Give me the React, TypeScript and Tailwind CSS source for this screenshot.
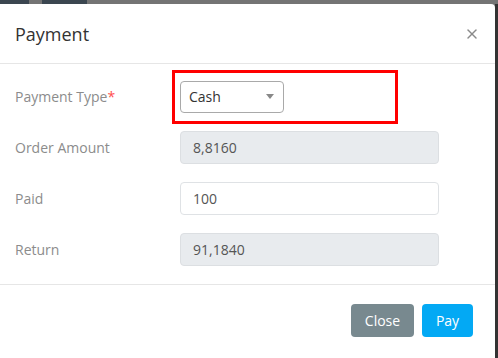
import { X } from 'lucide-react'

const FONT = { fontFamily: '"Open Sans", "Noto Sans", sans-serif' }

interface Row {
  label: string
  value: string
  readOnly?: boolean
}

const ROWS: Row[] = [
  { label: 'Order Amount', value: '8,8160', readOnly: true },
  { label: 'Paid', value: '100' },
  { label: 'Return', value: '91,1840', readOnly: true }
]

function Field({ row }: { row: Row }): JSX.Element {
  return (
    <div className="flex items-center h-[33px]">
      <div className="w-[165px] text-[14px] text-[#8c8c8c]">{row.label}</div>
      <div
        className={[
          'w-[259px] h-[33px] flex items-center px-[12px] rounded-[4px] border text-[14px] text-[#555]',
          row.readOnly ? 'bg-[#e8ebee] border-[#dcdfe2]' : 'bg-white border-[#dfe2e5]'
        ].join(' ')}
      >
        {row.value}
      </div>
    </div>
  )
}

export default function App(): JSX.Element {
  return (
    <div className="w-[498px] h-[358px] bg-[#747474] flex flex-col overflow-hidden" style={FONT}>
      {/* backdrop strip above the dialog */}
      <div className="h-[4px] flex shrink-0">
        <div className="w-[29px] bg-[#3b4650]" />
        <div className="w-[13px]" />
        <div className="w-[45px] bg-[#3b4650]" />
      </div>
      <div className="flex flex-1">
        <div className="w-[495px] bg-white rounded-tr-[4px] flex flex-col">
          <div className="h-[60px] flex items-center justify-between pl-[15px] pr-[15px] border-b border-[#e6e6e6]">
            <span className="text-[18px] text-[#333] pt-[2px]">Payment</span>
            <X size={16} strokeWidth={2.2} className="text-[#8a8a8a]" />
          </div>
          <div className="pl-[15px] pt-[16px] pb-[18px] flex flex-col gap-[18px] border-b border-[#e6e6e6]">
            <div className="flex items-center h-[33px]">
              <div className="w-[165px] text-[14px] text-[#8c8c8c]">
                Payment Type<span className="text-[#ff4d4d]">*</span>
              </div>
              <div className="relative">
                <div className="w-[104px] h-[32px] flex items-center justify-between pl-[8px] pr-[9px] rounded-[4px] border border-[#a9a9a9] text-[14px] text-[#333]">
                  <span>Cash</span>
                  <span className="w-0 h-0 border-l-[4px] border-r-[4px] border-t-[5px] border-l-transparent border-r-transparent border-t-[#888]" />
                </div>
                <div className="absolute left-[-8px] top-[-11px] w-[226px] h-[54px] border-[3px] border-[#f00]" />
              </div>
            </div>
            {ROWS.map((r) => (
              <Field key={r.label} row={r} />
            ))}
          </div>
          <div className="flex-1 flex justify-end items-start pt-[19px] pr-[22px] gap-[8px]">
            <button className="w-[63px] h-[33px] rounded-[4px] bg-[#78898f] text-white text-[14px]">
              Close
            </button>
            <button className="w-[51px] h-[33px] rounded-[4px] bg-[#03a9f4] text-white text-[14px]">
              Pay
            </button>
          </div>
        </div>
        <div className="w-[3px] bg-[#333]" />
      </div>
    </div>
  )
}
